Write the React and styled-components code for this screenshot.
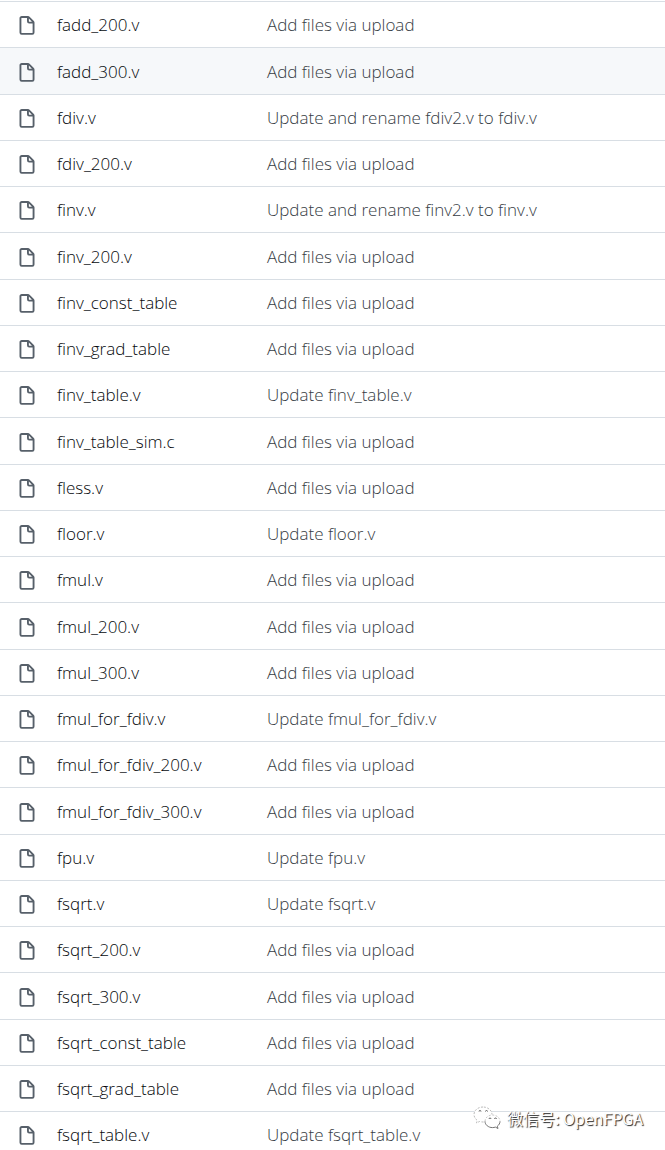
import React from 'react';
import styled, { createGlobalStyle } from 'styled-components';

const GlobalStyle = createGlobalStyle`
  body {
    margin: 0;
    background: #ffffff;
  }
`;

const Page = styled.main`
  position: relative;
  padding-top: 1px;
  font-family: 'Open Sans', 'Noto Sans', sans-serif;
  font-size: 17px;
  font-weight: 300;
  line-height: 24px;
`;

const FileTable = styled.table`
  width: 100%;
  table-layout: fixed;
  border-spacing: 0;
  border-top: 1px solid #d8dee4;
`;

const Cell = styled.td`
  width: ${({ $width }) => $width || 'auto'};
  box-sizing: border-box;
  padding: 11px 0 10px;
  border-bottom: 1px solid #d8dee4;
  vertical-align: top;
  white-space: nowrap;
`;

const IconCell = styled(Cell)`
  padding-left: 17px;
`;

const FileRow = styled.tr`
  background: ${({ $active }) => ($active ? '#f6f8fa' : 'transparent')};

  &:nth-child(4n + 2) ${Cell} {
    padding-top: 12px;
  }

  &:last-child ${Cell} {
    padding-bottom: 3px;
    border-bottom: none;
  }
`;

const FileIcon = styled.svg`
  display: block;
  width: 20px;
  height: 20px;
  margin-top: 3px;
  fill: #57606a;
`;

const NameLink = styled.a`
  color: #05080c;
  text-decoration: none;
`;

const MessageLink = styled.a`
  color: #363c44;
  text-decoration: none;
`;

const Watermark = styled.div`
  position: absolute;
  right: 22px;
  bottom: 20px;
  display: flex;
  align-items: center;
  gap: 6px;
  color: #ffffff;
  font-family: 'Noto Sans CJK SC', sans-serif;
  font-size: 16px;
  font-weight: 400;
  text-shadow: 1px 1px 1px #222222;
`;

const WechatLogo = styled.svg`
  width: 28px;
  height: 24px;
`;

const files = [
  { name: 'fadd_200.v', message: 'Add files via upload' },
  { name: 'fadd_300.v', message: 'Add files via upload', active: true },
  { name: 'fdiv.v', message: 'Update and rename fdiv2.v to fdiv.v' },
  { name: 'fdiv_200.v', message: 'Add files via upload' },
  { name: 'finv.v', message: 'Update and rename finv2.v to finv.v' },
  { name: 'finv_200.v', message: 'Add files via upload' },
  { name: 'finv_const_table', message: 'Add files via upload' },
  { name: 'finv_grad_table', message: 'Add files via upload' },
  { name: 'finv_table.v', message: 'Update finv_table.v' },
  { name: 'finv_table_sim.c', message: 'Add files via upload' },
  { name: 'fless.v', message: 'Add files via upload' },
  { name: 'floor.v', message: 'Update floor.v' },
  { name: 'fmul.v', message: 'Add files via upload' },
  { name: 'fmul_200.v', message: 'Add files via upload' },
  { name: 'fmul_300.v', message: 'Add files via upload' },
  { name: 'fmul_for_fdiv.v', message: 'Update fmul_for_fdiv.v' },
  { name: 'fmul_for_fdiv_200.v', message: 'Add files via upload' },
  { name: 'fmul_for_fdiv_300.v', message: 'Add files via upload' },
  { name: 'fpu.v', message: 'Update fpu.v' },
  { name: 'fsqrt.v', message: 'Update fsqrt.v' },
  { name: 'fsqrt_200.v', message: 'Add files via upload' },
  { name: 'fsqrt_300.v', message: 'Add files via upload' },
  { name: 'fsqrt_const_table', message: 'Add files via upload' },
  { name: 'fsqrt_grad_table', message: 'Add files via upload' },
  { name: 'fsqrt_table.v', message: 'Update fsqrt_table.v' },
];

function App() {
  return (
    <Page>
      <GlobalStyle />
      <FileTable>
        <tbody>
          {files.map((file) => (
            <FileRow key={file.name} $active={file.active}>
              <IconCell $width="57px">
                <FileIcon viewBox="0 0 16 16" aria-hidden="true">
                  <path
                    fillRule="evenodd"
                    d="M3.75 1.5a.25.25 0 00-.25.25v11.5c0 .138.112.25.25.25h8.5a.25.25 0 00.25-.25V6H9.75A1.75 1.75 0 018 4.25V1.5H3.75zm5.75.56v2.19c0 .138.112.25.25.25h2.19L9.5 2.06zM2 1.75C2 .784 2.784 0 3.75 0h5.086c.464 0 .909.184 1.237.513l3.414 3.414c.329.328.513.773.513 1.237v8.086A1.75 1.75 0 0112.25 15h-8.5A1.75 1.75 0 012 13.25V1.75z"
                  />
                </FileIcon>
              </IconCell>
              <Cell $width="210px">
                <NameLink href={`#${file.name}`}>{file.name}</NameLink>
              </Cell>
              <Cell>
                <MessageLink href={`#commit-${file.name}`}>{file.message}</MessageLink>
              </Cell>
            </FileRow>
          ))}
        </tbody>
      </FileTable>

      <Watermark>
        <WechatLogo viewBox="0 0 28 24" aria-hidden="true">
          <path
            d="M10 1C5 1 1 4.300 1 8.500c0 2.400 1.300 4.500 3.300 5.900L3.500 17l3-1.500c1.100.3 2.300.5 3.500.5 5 0 9-3.400 9-7.500S15 1 10 1z"
            fill="#fff"
            stroke="#aaa"
            strokeWidth="0.800"
            strokeDasharray="2 1.500"
          />
          <path
            d="M19.500 9c-4.200 0-7.500 2.800-7.500 6.300s3.300 6.300 7.500 6.300c1 0 2-.2 2.900-.5l2.600 1.400-.7-2.300c1.700-1.200 2.700-2.900 2.700-4.900 0-3.500-3.300-6.300-7.500-6.300z"
            fill="#fff"
            stroke="#fff"
            strokeWidth="1"
          />
          <path
            d="M12 15.300c0 3.500 3.300 6.300 7.500 6.300 1 0 2-.2 2.900-.5l2.600 1.400-.7-2.300c1.700-1.200 2.700-2.900 2.700-4.900"
            fill="none"
            stroke="#666"
            strokeWidth="0.900"
          />
          <path
            d="M12 15.300c0-3.500 3.300-6.300 7.500-6.300s7.500 2.800 7.500 6.300"
            fill="none"
            stroke="#bbb"
            strokeWidth="0.800"
            strokeDasharray="2 1.500"
          />
          <path
            d="M6 5.500a1 1 0 0 1 2 0M12.500 5.500a1 1 0 0 1 2 0M16 13a1 1 0 0 1 2 0M21.500 13a1 1 0 0 1 2 0"
            fill="none"
            stroke="#555"
            strokeWidth="0.900"
          />
        </WechatLogo>
        <span>微信号: OpenFPGA</span>
      </Watermark>
    </Page>
  );
}

export default App;
